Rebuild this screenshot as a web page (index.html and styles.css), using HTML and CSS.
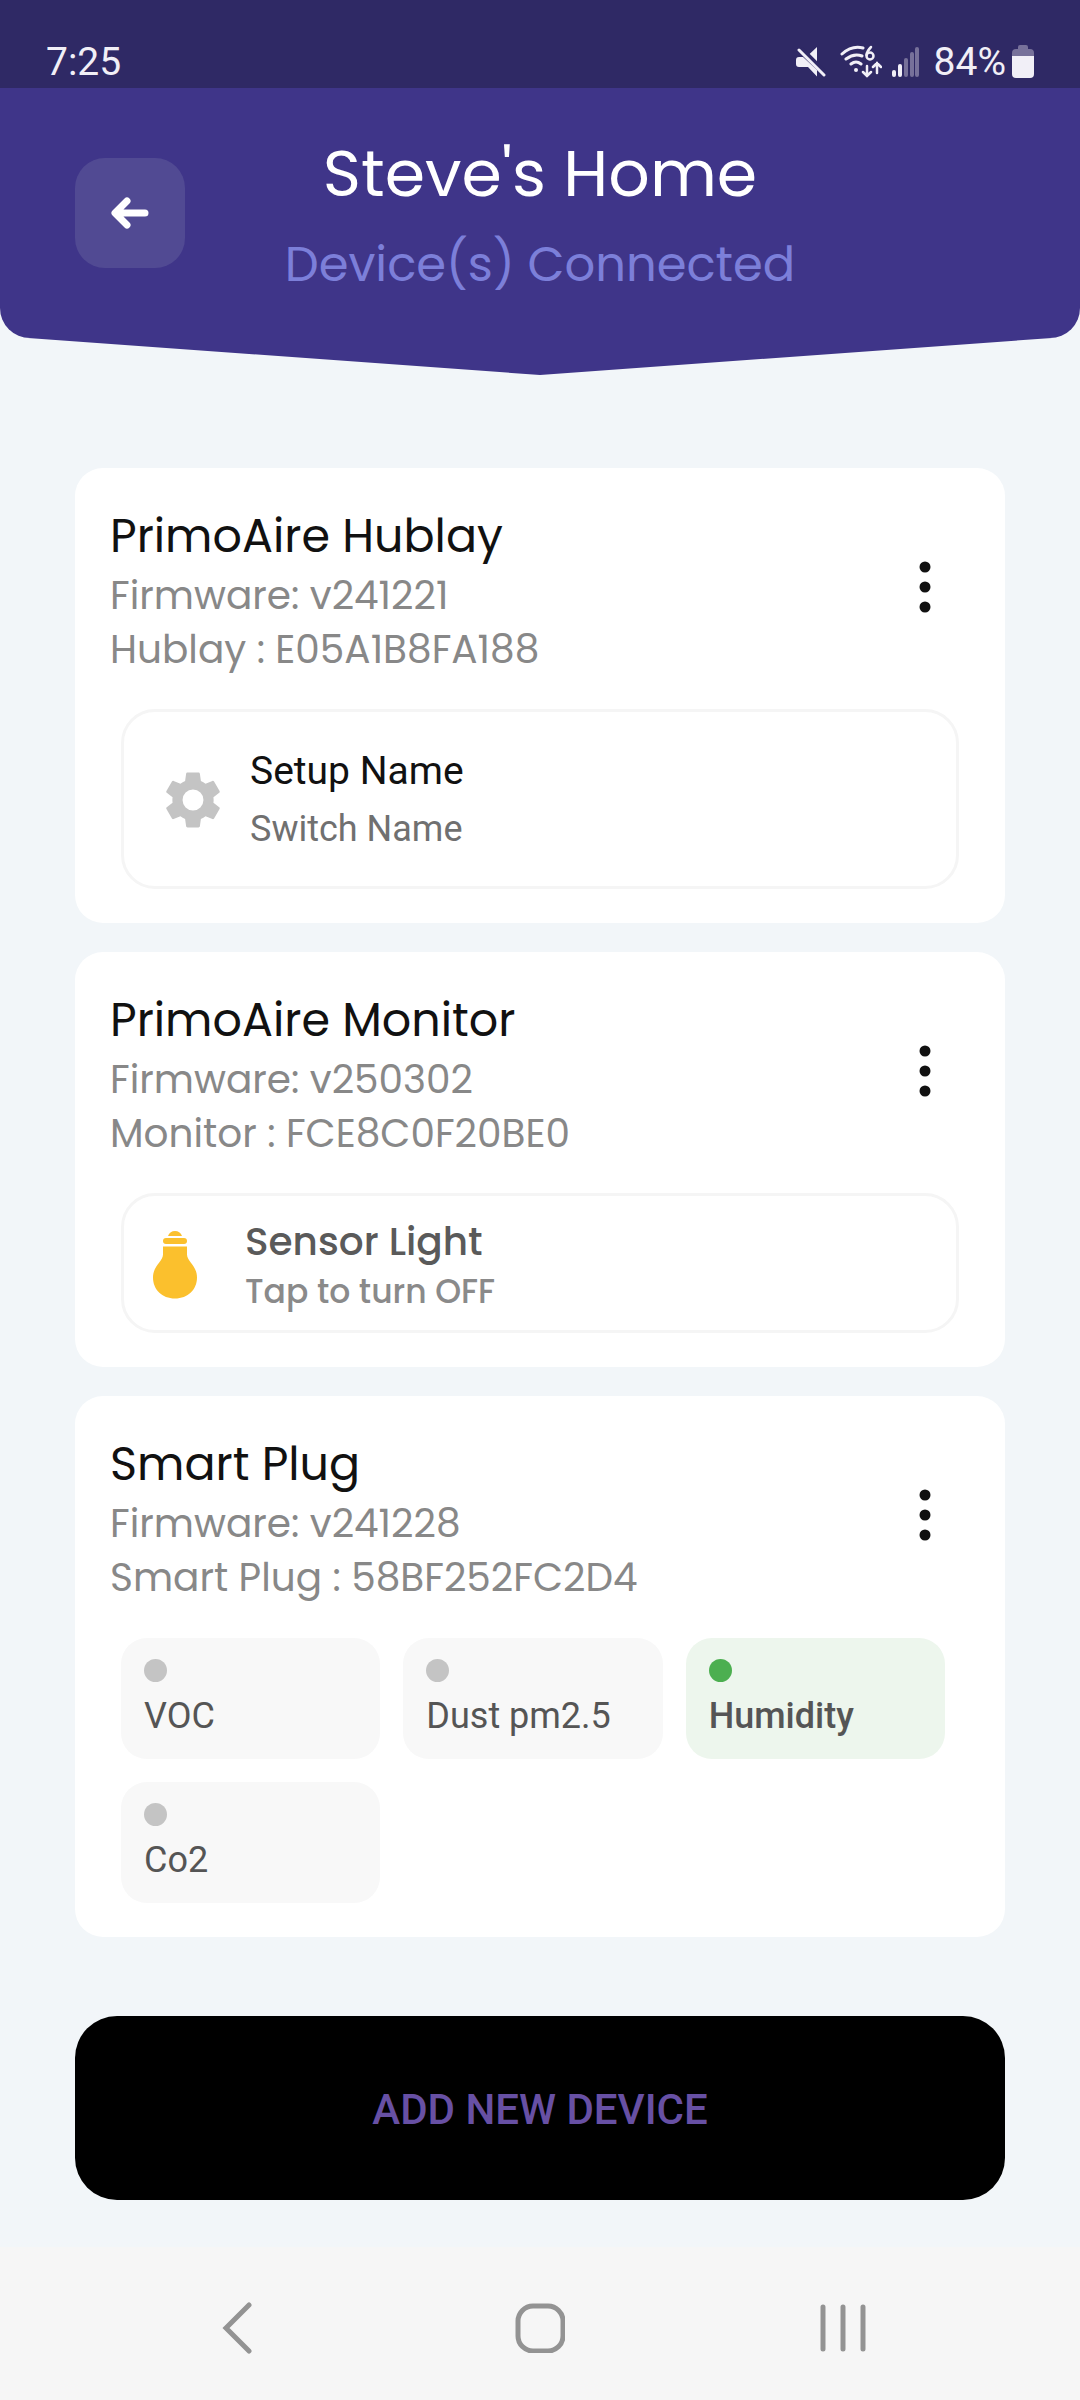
FILE: index.html
```html
<!DOCTYPE html>
<html lang="en">
<head>
    <meta charset="UTF-8">
    <meta name="viewport" content="width=device-width, initial-scale=1.0">
    <title>Steve's Home</title>
    <link rel="stylesheet" href="styles.css">
</head>
<body>

<div class="status-bar">
    <span>7:25</span>
    <div class="status-icons">
        <svg width="30" height="30" viewBox="0 0 30 30" aria-hidden="true">
            <path d="M21 0v15L13 7.500z" fill="#f1eff7" />
            <path d="M3 10h4l14 13v6.500L12 20H3q-3 0-3-3v-4q0-3 3-3z" fill="#f1eff7" />
            <path d="M5 1l25 25" stroke="#2f2965" stroke-width="4" />
            <path d="M3 3l25 25" stroke="#f1eff7" stroke-width="3" stroke-linecap="round" />
        </svg>
        <svg class="wifi" width="42" height="34" viewBox="0 0 42 34" aria-hidden="true">
            <g fill="none" stroke="#f1eff7" stroke-width="3" stroke-linecap="round">
                <path d="M2 9Q12 0 23 3M6 14q8-6 16-3M11 19q5-4 10 0" />
                <path d="M31 2q-4 4-4.500 8" stroke-width="2.500" />
                <circle cx="30" cy="11" r="3.500" stroke-width="2.500" />
                <path d="M27 21v10m-4-4l4 4 4-4M37 28V18m-4 4l4-4 4 4" stroke-width="2.500" />
            </g>
            <circle cx="16" cy="25" r="2" fill="#f1eff7" />
        </svg>
        <svg class="signal" width="28" height="30" viewBox="0 0 28 30" aria-hidden="true">
            <g fill="#f1eff7">
                <rect x="0" y="23" width="4" height="7" rx="2" />
                <rect x="6" y="17" width="4" height="13" rx="2" />
            </g>
            <g fill="#77719a">
                <rect x="12" y="11" width="4" height="19" rx="2" />
                <rect x="18" y="5" width="4" height="25" rx="2" />
                <rect x="23" y="0" width="4" height="30" rx="2" />
            </g>
        </svg>
        <span>84%</span>
        <svg class="battery" width="22" height="34" viewBox="0 0 22 34" aria-hidden="true">
            <path d="M6 4V2q0-2 2-2h6q2 0 2 2v2h2q4 0 4 4v4H0V8q0-4 4-4z" fill="#77719a" />
            <path d="M0 11h22v18q0 4-4 4H4q-4 0-4-4z" fill="#f1eff7" />
        </svg>
    </div>
</div>

<header class="header">
    <button class="back-btn" type="button" aria-label="Back">
        <svg width="38" height="32" viewBox="0 0 38 32" fill="none" stroke="#fff" stroke-width="7" stroke-linecap="round" stroke-linejoin="round" aria-hidden="true">
            <path d="M16 4L4 16l12 12M6 16h28" />
        </svg>
    </button>
    <div class="header-text">
        <h1>Steve's Home</h1>
        <p>Device(s) Connected</p>
    </div>
</header>
<div class="header-tip"></div>

<main class="content">
    <section class="card">
        <div class="card-head">
            <div>
                <h2>PrimoAire Hublay</h2>
                <p>Firmware: v241221</p>
                <p>Hublay : E05A1B8FA188</p>
            </div>
            <button class="menu-btn" type="button" aria-label="Hublay options">
                <svg width="12" height="52" viewBox="0 0 12 52" fill="#111" aria-hidden="true">
                    <circle cx="6" cy="6" r="5.500" /><circle cx="6" cy="26" r="5.500" /><circle cx="6" cy="46" r="5.500" />
                </svg>
            </button>
        </div>
        <button class="tile setup" type="button">
            <svg width="66" height="66" viewBox="0 0 24 24" fill="#c4c4c4" aria-hidden="true">
                <path d="M12,15.8A3.8,3.8 0 0,1 8.2,12A3.8,3.8 0 0,1 12,8.2A3.8,3.8 0 0,1 15.8,12A3.8,3.8 0 0,1 12,15.8M19.43,12.97C19.47,12.65 19.5,12.33 19.5,12C19.5,11.67 19.47,11.34 19.43,11L21.54,9.37C21.73,9.22 21.78,8.95 21.66,8.73L19.66,5.27C19.54,5.05 19.27,4.96 19.05,5.05L16.56,6.05C16.04,5.66 15.5,5.32 14.87,5.07L14.5,2.42C14.46,2.18 14.25,2 14,2H10C9.75,2 9.54,2.18 9.5,2.42L9.13,5.07C8.5,5.32 7.96,5.66 7.44,6.05L4.95,5.05C4.73,4.96 4.46,5.05 4.34,5.27L2.34,8.73C2.21,8.95 2.27,9.22 2.46,9.37L4.57,11C4.53,11.34 4.5,11.67 4.5,12C4.5,12.33 4.53,12.65 4.57,12.97L2.46,14.63C2.27,14.78 2.21,15.05 2.34,15.27L4.34,18.73C4.46,18.95 4.73,19.03 4.95,18.95L7.44,17.94C7.96,18.34 8.5,18.68 9.13,18.93L9.5,21.58C9.54,21.82 9.75,22 10,22H14C14.25,22 14.46,21.82 14.5,21.58L14.87,18.93C15.5,18.67 16.04,18.34 16.56,17.94L19.05,18.95C19.27,19.03 19.54,18.95 19.66,18.73L21.66,15.27C21.78,15.05 21.73,14.78 21.54,14.63L19.43,12.97Z" />
            </svg>
            <span class="tile-text">
                <span class="tile-title">Setup Name</span>
                <span class="tile-sub">Switch Name</span>
            </span>
        </button>
    </section>

    <section class="card">
        <div class="card-head">
            <div>
                <h2>PrimoAire Monitor</h2>
                <p>Firmware: v250302</p>
                <p>Monitor : FCE8C0F20BE0</p>
            </div>
            <button class="menu-btn" type="button" aria-label="Monitor options">
                <svg width="12" height="52" viewBox="0 0 12 52" fill="#111" aria-hidden="true">
                    <circle cx="6" cy="6" r="5.500" /><circle cx="6" cy="26" r="5.500" /><circle cx="6" cy="46" r="5.500" />
                </svg>
            </button>
        </div>
        <button class="tile light" type="button">
            <svg width="46" height="68" viewBox="0 0 46 68" fill="#fbc02d" aria-hidden="true">
                <path d="M16 5q2-5 7-5t7 5z" />
                <rect x="11" y="7" width="24" height="6" rx="3" />
                <path d="M11 15.500h24v8c0 7 10 11 10 23 0 12-9 21-22 21S1 58.500 1 46.500c0-12 10-16 10-23z" />
            </svg>
            <span class="tile-text">
                <span class="tile-title">Sensor Light</span>
                <span class="tile-sub">Tap to turn OFF</span>
            </span>
        </button>
    </section>

    <section class="card">
        <div class="card-head">
            <div>
                <h2>Smart Plug</h2>
                <p>Firmware: v241228</p>
                <p>Smart Plug : 58BF252FC2D4</p>
            </div>
            <button class="menu-btn" type="button" aria-label="Smart Plug options">
                <svg width="12" height="52" viewBox="0 0 12 52" fill="#111" aria-hidden="true">
                    <circle cx="6" cy="6" r="5.500" /><circle cx="6" cy="26" r="5.500" /><circle cx="6" cy="46" r="5.500" />
                </svg>
            </button>
        </div>
        <div class="chips">
            <button class="chip" type="button"><i class="dot"></i>VOC</button>
            <button class="chip" type="button"><i class="dot"></i>Dust pm2.5</button>
            <button class="chip active" type="button"><i class="dot"></i>Humidity</button>
            <button class="chip" type="button"><i class="dot"></i>Co2</button>
        </div>
    </section>

    <button class="add-btn" type="button">ADD NEW DEVICE</button>
</main>

<nav class="nav-bar">
    <button type="button" aria-label="Back">
        <svg width="30" height="52" viewBox="0 0 30 52" fill="none" stroke="#939393" stroke-width="5" stroke-linecap="round" aria-hidden="true">
            <path d="M27 3L4 26l23 23" />
        </svg>
    </button>
    <button type="button" aria-label="Home">
        <svg width="50" height="50" viewBox="0 0 50 50" fill="none" stroke="#939393" stroke-width="5" aria-hidden="true">
            <rect x="3" y="3" width="45" height="45" rx="15" />
        </svg>
    </button>
    <button type="button" aria-label="Recent apps">
        <svg width="46" height="50" viewBox="0 0 46 50" stroke="#939393" stroke-width="5" stroke-linecap="round" aria-hidden="true">
            <path d="M3 4v42M23 4v42M43 4v42" />
        </svg>
    </button>
</nav>

</body>
</html>
```
FILE: styles.css
```css
* {
    box-sizing: border-box;
    margin: 0;
    padding: 0;
}

body {
    font-family: Poppins, Inter, sans-serif;
    background: #f2f6f9;
    min-height: 100vh;
    display: flex;
    flex-direction: column;
}

button {
    border: none;
    background: none;
    font-family: inherit;
    cursor: pointer;
}

svg {
    display: block;
    flex: none;
}

.status-bar {
    display: flex;
    justify-content: space-between;
    align-items: center;
    padding: 38px 46px 2px;
    background: #2f2965;
    color: #f1eff7;
    font-family: Roboto, sans-serif;
    font-size: 39px;
    line-height: 48px;
}

.status-icons {
    display: flex;
    align-items: center;
}

.status-icons .wifi {
    margin: 0 10px 0 14px;
}

.status-icons .signal {
    margin-right: 14px;
}

.status-icons .battery {
    margin-left: 6px;
}

/* Header */
.header {
    display: grid;
    grid-template-columns: 110px 1fr 110px;
    align-items: center;
    padding: 28px 75px;
    background: #3f3589;
    border-radius: 0 0 30px 30px;
}

.header-tip {
    height: 37px;
    margin: 0 28px;
    background: #3f3589;
    clip-path: polygon(0 0, 100% 0, 50% 100%);
}

.back-btn {
    display: flex;
    align-items: center;
    justify-content: center;
    height: 110px;
    border-radius: 30px;
    background: #514a93;
}

.header-text {
    padding-top: 12px;
    text-align: center;
}

.header-text h1 {
    color: #fff;
    font-size: 65px;
    font-weight: 400;
    line-height: 92px;
}

.header-text p {
    color: #7c7fd9;
    font-size: 48px;
    font-weight: 400;
    line-height: 90px;
}

/* Device cards */
.content {
    flex: 1;
    display: flex;
    flex-direction: column;
    gap: 29px;
    padding: 93px 75px 46px;
}

.card {
    padding: 35px 35px 34px;
    border-radius: 28px;
    background: #fff;
}

.card-head {
    display: flex;
    justify-content: space-between;
}

.card h2 {
    color: #111;
    font-size: 46px;
    font-weight: 400;
    line-height: 66px;
}

.card p {
    color: #888;
    font-size: 39px;
    font-weight: 400;
    line-height: 54px;
}

.menu-btn {
    display: flex;
    align-items: center;
    justify-content: center;
    width: 90px;
    height: 168px;
}

.tile {
    display: flex;
    align-items: center;
    width: calc(100% - 22px);
    margin: 32px 11px 0;
    border: 3px solid #f5f5f5;
    border-radius: 34px;
    text-align: left;
}

.tile-text,
.tile-text span {
    display: block;
}

.setup {
    gap: 24px;
    padding: 30px 36px 28px;
    font-family: Roboto, sans-serif;
}

.setup .tile-title {
    color: #111;
    font-size: 39px;
    line-height: 58px;
}

.setup .tile-sub {
    color: #707070;
    font-size: 36px;
    line-height: 58px;
}

.light {
    gap: 47px;
    padding: 19px 28px 15px;
    font-weight: 500;
}

.light .tile-title {
    color: #5a5a5a;
    font-size: 39px;
    line-height: 54px;
}

.light .tile-sub {
    color: #8a8a8a;
    font-size: 33px;
    line-height: 46px;
}

.chips {
    display: grid;
    grid-template-columns: repeat(3, 1fr);
    gap: 23px;
    margin: 33px 25px 0 11px;
}

.chip {
    padding: 21px 23px 9px;
    border-radius: 26px;
    background: #f8f8f8;
    color: #555;
    font-family: Roboto, sans-serif;
    font-size: 36px;
    line-height: 68px;
    text-align: left;
}

.dot {
    display: block;
    width: 23px;
    height: 23px;
    border-radius: 50%;
    background: #c4c4c4;
}

.chip.active {
    background: #edf6ed;
    font-weight: 500;
}

.active .dot {
    background: #4caf50;
}

.add-btn {
    margin-top: 50px;
    padding: 62px 60px 58px;
    border-radius: 42px;
    background: #000;
    color: #6750a4;
    font-family: Roboto, sans-serif;
    font-size: 42px;
    font-weight: 500;
    line-height: 64px;
}

/* Android navigation */
.nav-bar {
    display: grid;
    grid-template-columns: repeat(3, 1fr);
    padding: 54px 86px 46px;
    background: #f6f6f6;
}

.nav-bar button {
    display: flex;
    align-items: center;
    justify-content: center;
    height: 53px;
}
```
